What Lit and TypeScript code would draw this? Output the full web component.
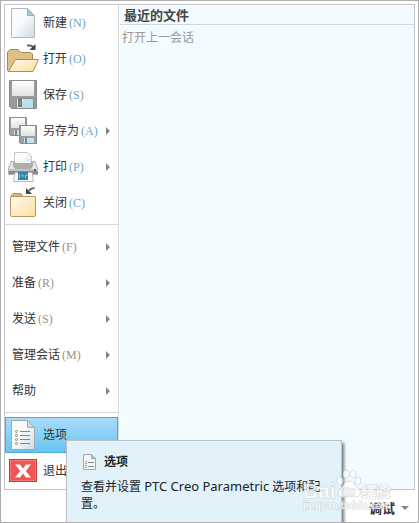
import { LitElement, html, svg, css, nothing, TemplateResult, SVGTemplateResult } from "lit";
import { customElement, property } from "lit/decorators.js";
import { classMap } from "lit/directives/class-map.js";

interface Item {
  label: string;
  key?: string;
  icon?: string;
  sub?: boolean;
  active?: boolean;
}

const groups: Item[][] = [
  [
    { label: "新建", key: "N", icon: "new" },
    { label: "打开", key: "O", icon: "open" },
    { label: "保存", key: "S", icon: "save" },
    { label: "另存为", key: "A", icon: "saveas", sub: true },
    { label: "打印", key: "P", icon: "print", sub: true },
    { label: "关闭", key: "C", icon: "close" },
  ],
  [
    { label: "管理文件", key: "F", sub: true },
    { label: "准备", key: "R", sub: true },
    { label: "发送", key: "S", sub: true },
    { label: "管理会话", key: "M", sub: true },
    { label: "帮助", sub: true },
  ],
  [
    { label: "选项", icon: "options", active: true },
    { label: "退出", icon: "exit" },
  ],
];

const floppy = svg`
  <path d="M0.5 0.5H27.5V28.5H2.5L0.5 26.5Z" fill="#9b9b9b" stroke="#8c8c8c"/>
  <rect x="3" y="1" width="22" height="15" fill="url(#paper)"/>
  <path d="M3 1.5H25" stroke="#fff"/>
  <path d="M7 18H24V28H7Z" fill="#b9dff0"/>
  <path d="M7 18H15L11 28H7Z" fill="#e9f5fa"/>
  <path d="M7.500 28V18.500H24.500V28" fill="none" stroke="#858c90"/>
  <rect x="9.500" y="19.500" width="3" height="7" fill="#8c8f92" stroke="#707070"/>`;

const smallFloppy = svg`
  <path d="M0.5 0.5H17.500V18.500H1.500L0.5 17.500Z" fill="#9f9f9f" stroke="#8c8c8c"/>
  <rect x="2" y="1" width="14" height="10" fill="url(#paper)"/>
  <rect x="5" y="13" width="10" height="5" fill="#c5e4f1"/>
  <rect x="6" y="13" width="2" height="5" fill="#7d8488"/>`;

const icons: Record<string, SVGTemplateResult> = {
  new: svg`
    <path d="M4.500 1.500H20.500L27.500 8.500V30.500H4.500Z" fill="url(#page)" stroke="#b3b7b9"/>
    <path d="M20.500 1.500V8.500H27.500Z" fill="#a9c5d3" stroke="#9fb3bd"/>`,
  open: svg`
    <path d="M20 2.500H23.500L26.500 4" fill="none" stroke="#666" stroke-width="2"/>
    <path d="M28.500 1V7H22.500Z" fill="#444"/>
    <path d="M0.500 27.500V9L3 6.500H11L14 9.500H24L25.500 11V17L7 28.500H1.500Z" fill="#dfc086" stroke="#ab8750"/>
    <path d="M1.500 28.500L8.500 16.500H31.500L26 28.500Z" fill="url(#gold)" stroke="#b18a4c"/>`,
  save: svg`<g transform="translate(2 1)">${floppy}</g>`,
  saveas: svg`
    <g transform="translate(2 2)">${smallFloppy}</g>
    <g transform="translate(12 10)">${smallFloppy}</g>`,
  print: svg`
    <path d="M7.500 14V1.500H20.500L24.500 5V14Z" fill="url(#page)" stroke="#c4c8ca"/>
    <path d="M4 10.500H28L30.500 17V23.500H1.500V17Z" fill="#e6e6e6" stroke="#b3b3b3"/>
    <path d="M6 11H26V15L24 18H8L6 15Z" fill="#adadad"/>
    <rect x="8" y="10" width="16" height="2" fill="#f4f4f4"/>
    <rect x="2" y="19" width="29" height="4" fill="#8a8a8a"/>
    <rect x="2" y="18" width="29" height="2" fill="#c4c4c4"/>
    <rect x="27" y="18" width="2" height="2" fill="#555"/>
    <path d="M8 21.500H25L26.500 30.500H6.500Z" fill="#fbfbfb" stroke="#bbb"/>
    <rect x="11" y="21" width="10" height="8" fill="#3582a6"/>
    <path d="M12.500 23V27M14.500 24H16V26M18.500 24V27M20 23V25" fill="none" stroke="#8ecbe4"/>`,
  close: svg`
    <path d="M27.500 1C25 1 23.500 2 22 3.500" fill="none" stroke="#666" stroke-width="2"/>
    <path d="M19 1V7H25Z" fill="#444"/>
    <path d="M4 13V9L6 6.500H14L16 9.500H28V13Z" fill="#d8b77c" stroke="#b69259"/>
    <rect x="3.500" y="9.500" width="25" height="20" rx="1.500" fill="url(#gold)" stroke="#b9965d"/>`,
  options: svg`
    <path d="M4.500 1.500H20.500L27.500 8.500V30.500H4.500Z" fill="url(#page)" stroke="#a3a8ab"/>
    <path d="M20.500 1.500V8.500H27.500Z" fill="#d5dade" stroke="#a3a8ab"/>
    <g fill="none" stroke="#858585">
      <circle cx="9.500" cy="12.500" r="1"/><circle cx="9.500" cy="16.500" r="1"/>
      <circle cx="9.500" cy="20.500" r="1"/><circle cx="9.500" cy="24.500" r="1"/>
      <path d="M13 12.500H23M13 16.500H23M13 20.500H23M13 24.500H23"/>
    </g>`,
  exit: svg`
    <rect x="2.500" y="4.500" width="27" height="22" fill="#ee5555" stroke="#c03d3d"/>
    <rect x="3.500" y="5.500" width="25" height="20" fill="none" stroke="#f77a76"/>
    <path d="M8 9.500H13L16 13.500L19 9.500H24L18.800 16L24 22.500H19L16 18.500L13 22.500H8L13.200 16Z" fill="#fff"/>`,
  note: svg`
    <path d="M1.500 0.500H9.500L13.500 4.500V15.500H1.500Z" fill="#f5f7f8" stroke="#a3a8ab"/>
    <path d="M9.500 0.500V4.500H13.500Z" fill="#c3cbd0" stroke="#a3a8ab"/>
    <path d="M6 8.500H12M6 12.500H12" fill="none" stroke="#888"/>
    <path d="M3 7.500H5M3 9.500H5M3 11.500H5M3 13.500H5" fill="none" stroke="#999"/>`,
};

@customElement("menu-icon")
export class MenuIcon extends LitElement {
  @property() name = "";
  @property({ type: Number }) size = 32;

  static styles = css`
    :host { display: block; flex: none; }
    svg { display: block; }
  `;

  render() {
    return html`<svg width=${this.size} height=${this.size} viewBox="0 0 ${this.size} ${this.size}" aria-hidden="true">
      <defs>
        <linearGradient id="page" x1="0" y1="0" x2="1" y2="1">
          <stop offset=".45" stop-color="#fafbfb"/><stop offset="1" stop-color="#c9dbe4"/>
        </linearGradient>
        <linearGradient id="paper" x1="0" y1="0" x2="0" y2="1">
          <stop offset="0" stop-color="#fdfdfd"/><stop offset="1" stop-color="#e2e2e2"/>
        </linearGradient>
        <linearGradient id="gold" x1="0" y1="0" x2="1" y2="1">
          <stop offset="0" stop-color="#fffaf0"/><stop offset="1" stop-color="#fddf9f"/>
        </linearGradient>
      </defs>
      ${icons[this.name] ?? nothing}
    </svg>`;
  }
}

@customElement("app-root")
export class AppRoot extends LitElement {
  static styles = css`
    :host {
      display: flex;
      flex-direction: column;
      box-sizing: border-box;
      height: 100vh;
      overflow: hidden;
      position: relative;
      padding: 3px;
      border: 1px solid #adadb0;
      background: #fff;
      color: #333;
      font: 12px/16px "Noto Sans", "Noto Sans CJK SC", sans-serif;
    }
    button {
      border: 0;
      margin: 0;
      background: none;
      font: inherit;
      color: inherit;
      text-align: left;
    }
    .panel {
      display: flex;
      flex: none;
      border: 1px solid #c3c3c8;
    }
    .menu {
      flex: none;
      width: 113px;
      border-right: 1px solid #d5d8dc;
    }
    .group + .group {
      border-top: 1px solid #d5d8dc;
      margin-top: 3px;
      padding-top: 4px;
    }
    .row { position: relative; }
    .item {
      display: flex;
      align-items: center;
      box-sizing: border-box;
      width: 100%;
      height: 36px;
      padding: 0 7px 0 1px;
      border: 1px solid transparent;
    }
    .item.plain { padding-left: 6px; }
    .item.active {
      border-color: #4fa6d8;
      background: linear-gradient(#a9dcfb, #67c4f0);
    }
    .label {
      margin-left: 4px;
      white-space: nowrap;
    }
    .plain .label { margin-left: 0; }
    .key {
      margin-left: 2px;
      font: 12px/16px "Liberation Serif", serif;
      color: #6fa3c8;
    }
    .plain .key { color: #9a8f8c; }
    .arrow {
      margin-left: auto;
      border: solid transparent;
      border-width: 4px 0 4px 4px;
      border-left-color: #858585;
    }
    .recent {
      flex: 1;
      min-width: 0;
      margin-left: 1px;
      background: #f2fbff;
    }
    h2 {
      margin: 0;
      padding: 2px 4px 1px;
      border-bottom: 1px solid #d2d5d8;
      box-shadow: 0 1px #fff;
      font-size: 13px;
      line-height: 16px;
      color: #444;
    }
    .session {
      display: block;
      padding: 5px 2px;
      color: #999;
      text-decoration: none;
    }
    .footer {
      display: flex;
      flex: 1;
      align-items: center;
      justify-content: flex-end;
      padding-top: 6px;
    }
    .debug {
      display: flex;
      align-items: center;
      gap: 6px;
      padding: 0 6px;
      font-size: 13px;
      font-weight: bold;
    }
    .down {
      border: solid transparent;
      border-width: 4px 4px 0;
      border-top-color: #858585;
    }
    .tip {
      position: absolute;
      z-index: 1;
      left: 61px;
      top: 23px;
      box-sizing: border-box;
      width: 276px;
      height: 96px;
      padding: 12px 14px;
      border: 1px solid #b9c1c6;
      background: #e1f2fb;
      box-shadow: 2px 3px 3px #0008;
      color: #222;
      line-height: 17px;
    }
    .tip-title {
      display: flex;
      align-items: center;
      gap: 6px;
      padding-left: 1px;
      font-weight: bold;
    }
    .tip p { margin: 8px 0 0; }
    .product { font-size: 13px; }
    .mark {
      position: absolute;
      z-index: 2;
      right: 25px;
      bottom: 7px;
      pointer-events: none;
    }
    .mark text {
      fill: #fffb;
      stroke: #b4bcc080;
      stroke-width: 1px;
      paint-order: stroke;
      font-family: "Liberation Sans", "Noto Sans CJK SC", sans-serif;
      font-weight: bold;
    }
    .mark .paw { fill: #fffb; stroke: #b4bcc080; }
  `;

  private tip(): TemplateResult {
    return html`<div class="tip" role="tooltip" id="tip">
      <div class="tip-title"><menu-icon name="note" size="16"></menu-icon>选项</div>
      <p>查看并设置 <span class="product">PTC Creo Parametric</span> 选项和配置。</p>
    </div>`;
  }

  private row(item: Item): TemplateResult {
    return html`<div class="row">
      <button
        role="menuitem"
        class=${classMap({ item: true, plain: !item.icon, active: !!item.active })}
        aria-haspopup=${item.sub ? "true" : nothing}
        aria-describedby=${item.active ? "tip" : nothing}
      >
        ${item.icon ? html`<menu-icon name=${item.icon}></menu-icon>` : nothing}
        <span class="label">${item.label}</span>
        ${item.key ? html`<span class="key">(${item.key})</span>` : nothing}
        ${item.sub ? html`<span class="arrow"></span>` : nothing}
      </button>
      ${item.active ? this.tip() : nothing}
    </div>`;
  }

  render() {
    return html`
      <main class="panel">
        <nav class="menu" role="menu">
          ${groups.map((g) => html`<div class="group" role="group">${g.map((i) => this.row(i))}</div>`)}
        </nav>
        <section class="recent">
          <h2>最近的文件</h2>
          <a class="session" href="#">打开上一会话</a>
        </section>
      </main>
      <footer class="footer">
        <button class="debug">调试<span class="down"></span></button>
      </footer>
      <svg class="mark" width="90" height="46" viewBox="0 0 90 46" aria-hidden="true">
        <text x="0" y="29" font-size="21">Bai</text>
        <g class="paw">
          <ellipse cx="37" cy="12" rx="3" ry="4"/><ellipse cx="43" cy="5" rx="3" ry="4"/>
          <ellipse cx="50" cy="5" rx="3" ry="4"/><ellipse cx="55" cy="12" rx="3" ry="4"/>
          <path d="M46 12C51 12 52 17 56 20C59 23 57 29 52 28C48 27 45 27 41 28C36 29 33 24 37 20C41 17 41 12 46 12Z"/>
        </g>
        <text x="40" y="26" font-size="10">du</text>
        <text x="58" y="28" font-size="15">经验</text>
        <text x="0" y="40" font-size="10">jingyan.baidu.com</text>
      </svg>
    `;
  }
}
